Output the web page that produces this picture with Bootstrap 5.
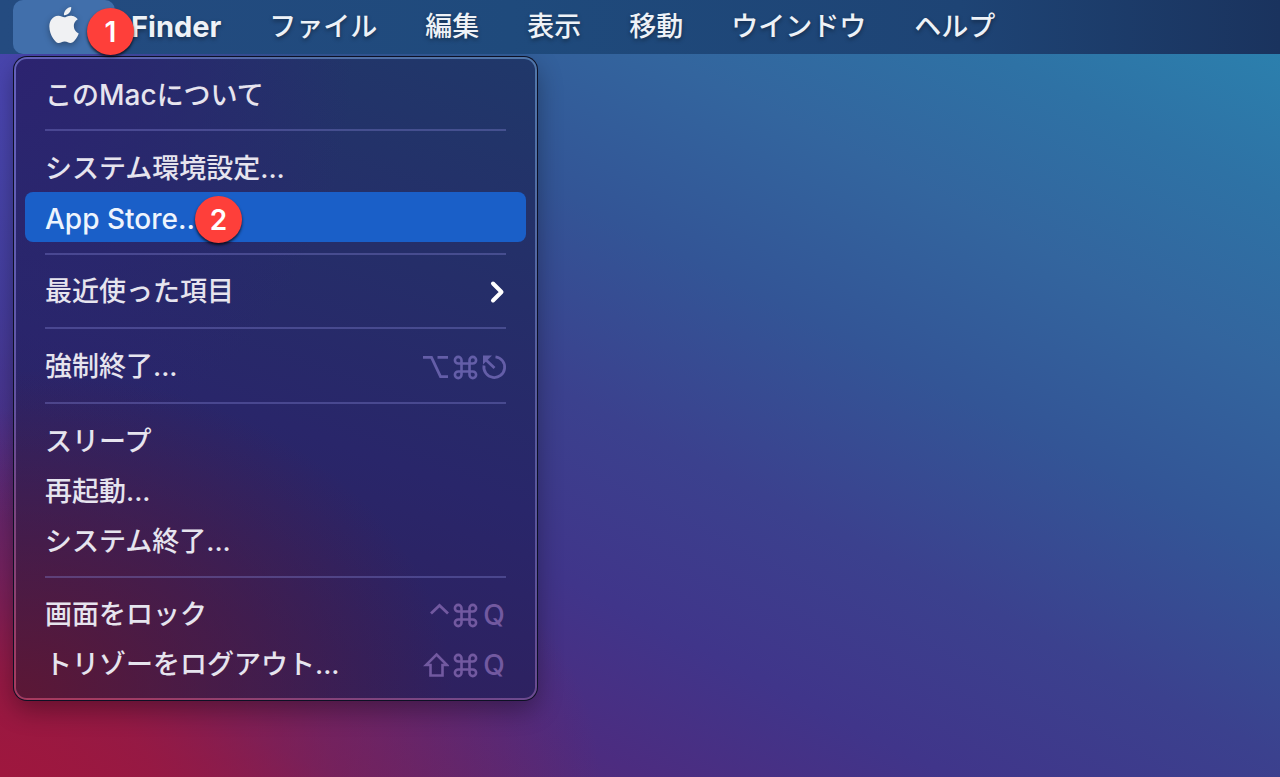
<!DOCTYPE html>
<html lang="ja">
<head>
<meta charset="utf-8">
<meta name="viewport" content="width=device-width, initial-scale=1">
<title>Finder</title>
<link href="https://cdn.jsdelivr.net/npm/bootstrap@5.3.0/dist/css/bootstrap.min.css" rel="stylesheet">
<style>
  body {
    font-family: Inter, "Noto Sans CJK JP", sans-serif;
    font-size: 27px;
    font-weight: 500;
    line-height: 50px;
    background:
      radial-gradient(ellipse 600px 370px at 0 100%, #9e173e 0%, #9e173ed0 25%, #9e173e68 55%, #9e173e00 100%),
      radial-gradient(ellipse 300px 420px at 0 100px, #4a45b0 0%, #4a45b000 100%),
      linear-gradient(207deg, #2b82af 2%, #2e72a5 14%, #33659e 26%, #335596 39%, #3b418e 53%, #40358a 66%, #4c2c80 77%, #5a2870 88%, #8c1a48 100%);
  }
  .menubar {
    height: 54px;
    background: linear-gradient(90deg, #244b80 0%, #1f4a7c 40%, #1e4475 75%, #1a335e 100%);
  }
  .menubar .nav-link {
    padding: 0 24px;
    line-height: 56px;
    font-weight: 500;
    color: #eef2f7;
    text-shadow: 0 2px 4px #0006;
  }
  .menubar .apple-menu {
    width: 102px;
    height: 54px;
    margin-left: 13px;
    border-radius: 10px;
    background: #416fab;
    color: #f0f1f3;
  }
  .apple-menu svg { filter: drop-shadow(0 2px 3px #0005); }
  .menubar .app-name { padding-left: 16px; font-size: 29px; font-weight: 700; }
  .step {
    width: 47px;
    height: 47px;
    line-height: 49px;
    background: #fe3f3a;
    color: #fff;
    font-size: 28px;
    font-weight: 600;
    text-align: center;
    border-radius: 50%;
    box-shadow: 0 2px 3px #000b;
  }
  .step-one { left: 74px; top: 8px; z-index: 2; }
  .step-two { left: 170px; top: 4px; }
  .system-menu {
    width: 523px;
    max-width: 100%;
    margin: 3px 14px 0;
    padding: 9px;
    font-size: inherit;
    border: 2px solid #ffffff26;
    border-radius: 13px;
    background-color: transparent;
    background-image:
      radial-gradient(ellipse 440px 330px at 0 100%, #5c1735 0%, #5c1735a0 35%, #5c173500 100%),
      radial-gradient(ellipse 340px 400px at 0 0, #2c2370 0%, #2c237000 100%),
      linear-gradient(200deg, #20386a 0%, #252e69 30%, #29266a 55%, #2e2160 80%, #33205a 100%);
    background-origin: border-box;
    box-shadow: 0 0 0 1px #0d1024, 0 10px 26px #0005;
  }
  .system-menu .dropdown-item {
    height: 50px;
    padding: 2px 20px 0;
    font-weight: 500;
    color: #e6e4ee;
    border-radius: 8px;
  }
  .system-menu .dropdown-item.active { background: #1a5fc8; color: #eef4fd; }
  .system-menu .latin { font-size: 28px; }
  .system-menu .dropdown-divider {
    margin: 11px 20px;
    border-top: 2px solid #8080d060;
    opacity: 1;
  }
  .system-menu .divider-tall { margin-bottom: 12px; }
  .keys { gap: 3px; color: #645ea8; margin-right: -1px; }
  .keys-low { color: #7259a0; }
  .keys svg, .chevron { fill: none; stroke: currentColor; display: block; }
  .key-letter { width: 26px; text-align: center; font-size: 28px; }
  .chevron { color: #fff; }
</style>
</head>
<body class="min-vh-100">
<svg class="d-none" aria-hidden="true">
  <symbol id="command" viewBox="0 0 26 26">
    <path stroke-width="2.600" d="M9.500 9.500H17.500V17.500H9.500ZM9.500 9.500V6.200A3.300 3.300 0 1 0 6.200 9.500ZM17.500 9.500H20.800A3.300 3.300 0 1 0 17.500 6.200ZM17.500 17.500V20.800A3.300 3.300 0 1 0 20.800 17.500ZM9.500 17.500H6.200A3.300 3.300 0 1 0 9.500 20.800Z"/>
  </symbol>
</svg>
<nav class="menubar d-flex align-items-center position-relative" aria-label="メニューバー">
  <button type="button" class="apple-menu btn border-0 p-0 d-flex align-items-center justify-content-center flex-shrink-0 position-relative" aria-label="アップルメニュー" aria-expanded="true">
    <svg class="mb-1" width="36" height="36" viewBox="0 0 24 24" fill="currentColor"><path d="M12.152 6.896c-.948 0-2.415-1.078-3.96-1.04-2.04.027-3.91 1.183-4.961 3.014-2.117 3.675-.546 9.103 1.519 12.09 1.013 1.454 2.208 3.09 3.792 3.039 1.52-.065 2.09-.987 3.935-.987 1.831 0 2.35.987 3.96.948 1.637-.026 2.676-1.48 3.676-2.948 1.156-1.688 1.636-3.325 1.662-3.415-.039-.013-3.182-1.221-3.22-4.857-.026-3.04 2.48-4.494 2.597-4.559-1.429-2.09-3.623-2.324-4.39-2.376-2-.156-3.675 1.09-4.61 1.09zM15.53 3.83c.843-1.012 1.4-2.427 1.245-3.83-1.207.052-2.662.805-3.532 1.818-.78.896-1.454 2.338-1.273 3.714 1.338.104 2.715-.688 3.559-1.701"/></svg>
    <span class="step step-one position-absolute">1</span>
  </button>
  <ul class="nav flex-nowrap text-nowrap">
    <li><a class="nav-link app-name" href="#">Finder</a></li>
    <li><a class="nav-link" href="#">ファイル</a></li>
    <li><a class="nav-link" href="#">編集</a></li>
    <li><a class="nav-link" href="#">表示</a></li>
    <li><a class="nav-link" href="#">移動</a></li>
    <li><a class="nav-link" href="#">ウインドウ</a></li>
    <li><a class="nav-link" href="#">ヘルプ</a></li>
  </ul>
</nav>
<main>
  <ul class="system-menu dropdown-menu show position-static">
    <li><button type="button" class="dropdown-item">この<span class="latin">Mac</span>について</button></li>
    <li><hr class="dropdown-divider"></li>
    <li><button type="button" class="dropdown-item">システム環境設定...</button></li>
    <li class="position-relative"><button type="button" class="dropdown-item active latin">App Store...</button><span class="step step-two position-absolute">2</span></li>
    <li><hr class="dropdown-divider"></li>
    <li><button type="button" class="dropdown-item d-flex align-items-center justify-content-between">最近使った項目
      <svg class="chevron" width="16" height="24" viewBox="0 0 16 24"><path stroke-width="4" stroke-linecap="round" stroke-linejoin="round" d="M3 3.500L11.500 12L3 20.500"/></svg></button></li>
    <li><hr class="dropdown-divider divider-tall"></li>
    <li><button type="button" class="dropdown-item d-flex align-items-center justify-content-between">強制終了...
      <span class="keys d-flex align-items-center">
        <svg width="26" height="26" viewBox="0 0 26 26"><path stroke-width="2.800" d="M0 3.300H8.500L17.500 22.700H25M14.500 3.300H25"/></svg>
        <svg width="26" height="26"><use href="#command"/></svg>
        <svg width="26" height="26" viewBox="0 0 26 26"><path stroke-width="2.800" d="M14.500 2.800A10.400 10.400 0 1 1 3 11.500M13.500 14L5 6"/><path fill="currentColor" stroke="none" d="M2 1.500H11L2 10.500Z"/></svg>
      </span></button></li>
    <li><hr class="dropdown-divider"></li>
    <li><button type="button" class="dropdown-item">スリープ</button></li>
    <li><button type="button" class="dropdown-item">再起動...</button></li>
    <li><button type="button" class="dropdown-item">システム終了...</button></li>
    <li><hr class="dropdown-divider"></li>
    <li><button type="button" class="dropdown-item d-flex align-items-center justify-content-between">画面をロック
      <span class="keys keys-low d-flex align-items-center">
        <svg width="26" height="26" viewBox="0 0 26 26"><path stroke-width="2.800" d="M8 11.500L16.500 3.500L25 11.500"/></svg>
        <svg width="26" height="26"><use href="#command"/></svg>
        <span class="key-letter">Q</span>
      </span></button></li>
    <li><button type="button" class="dropdown-item d-flex align-items-center justify-content-between">トリゾーをログアウト...
      <span class="keys keys-low d-flex align-items-center">
        <svg width="26" height="26" viewBox="0 0 26 26"><path stroke-width="2.600" d="M13.500 2.500L24 13H19.500V23.500H7.500V13H3Z"/></svg>
        <svg width="26" height="26"><use href="#command"/></svg>
        <span class="key-letter">Q</span>
      </span></button></li>
  </ul>
</main>
<script src="https://cdn.jsdelivr.net/npm/bootstrap@5.3.0/dist/js/bootstrap.bundle.min.js"></script>
</body>
</html>
